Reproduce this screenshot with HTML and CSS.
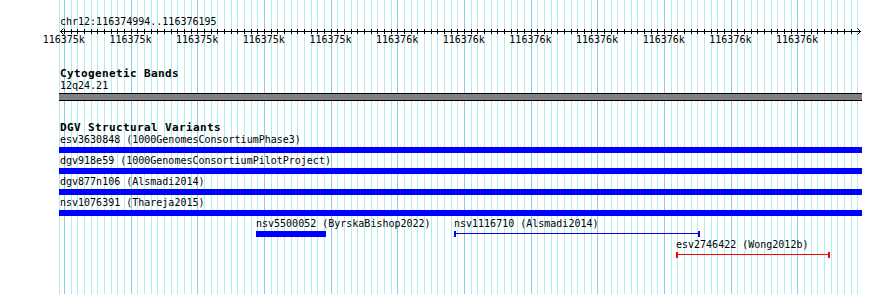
FILE: index.html
```html
<!DOCTYPE html>
<html lang="en">
<head>
<meta charset="utf-8">
<title>chr12:116374994..116376195</title>
<link rel="stylesheet" href="styles.css">
</head>
<body>
<div class="canvas">
  <div class="locus">chr12:116374994..116376195</div>
  <svg class="axis" width="803" height="6" viewBox="0 0 803 6">
    <defs>
      <pattern id="tk" x="5" y="0" width="20" height="6" patternUnits="userSpaceOnUse">
        <rect x="0" y="1" width="1" height="5"/>
        <rect x="7" y="1" width="1" height="5"/>
        <rect x="13" y="1" width="1" height="5"/>
      </pattern>
    </defs>
    <rect x="2" y="0" width="796" height="6" fill="url(#tk)"/>
    <rect x="1" y="3" width="801" height="1"/>
    <path d="M4.5 0.5 L1.5 3.5 L4.5 6.5" fill="none" stroke="#000" stroke-width="1"/>
    <path d="M798.5 0.5 L801.5 3.5 L798.5 6.5" fill="none" stroke="#000" stroke-width="1"/>
  </svg>
  <div class="ticks">
    <span class="tl">116375k</span><span class="tl">116375k</span><span class="tl">116375k</span><span class="tl">116375k</span><span class="tl">116375k</span><span class="tl">116376k</span><span class="tl">116376k</span><span class="tl">116376k</span><span class="tl">116376k</span><span class="tl">116376k</span><span class="tl">116376k</span><span class="tl">116376k</span>
  </div>

  <div class="track-title first">Cytogenetic Bands</div>
  <div class="label">12q24.21</div>
  <div class="band"></div>

  <div class="track-title second">DGV Structural Variants</div>
  <div class="row">
    <div class="label">esv3630848 (1000GenomesConsortiumPhase3)</div>
    <div class="bar"></div>
  </div>
  <div class="row">
    <div class="label">dgv918e59 (1000GenomesConsortiumPilotProject)</div>
    <div class="bar"></div>
  </div>
  <div class="row">
    <div class="label">dgv877n106 (Alsmadi2014)</div>
    <div class="bar"></div>
  </div>
  <div class="row">
    <div class="label">nsv1076391 (Thareja2015)</div>
    <div class="bar"></div>
  </div>
  <div class="lane">
    <div class="feat" style="left:197px">
      <div class="flabel">nsv5500052 (ByrskaBishop2022)</div>
      <div class="fbar" style="width:70px"></div>
    </div>
    <div class="feat" style="left:395px">
      <div class="flabel">nsv1116710 (Alsmadi2014)</div>
      <div class="span blue" style="width:246px"></div>
    </div>
  </div>
  <div class="lane">
    <div class="feat" style="left:617px">
      <div class="flabel">esv2746422 (Wong2012b)</div>
      <div class="span red" style="width:154px"></div>
    </div>
  </div>
</div>
</body>
</html>
```

FILE: styles.css
```css
html, body {
  margin: 0;
  padding: 0;
  background: #ffffff;
}

body {
  width: 890px;
  height: 294px;
  overflow: hidden;
  font-family: "DejaVu Sans Mono", "Liberation Mono", monospace;
  font-size: 10px;
  line-height: 12px;
  color: #000;
}

.canvas {
  position: relative;
  margin-left: 59px;
  width: 803px;
  height: 294px;
  box-sizing: border-box;
  padding-top: 16px;
  background:
    linear-gradient(#afeeee, #afeeee) 0 0 / 1px 100% no-repeat,
    linear-gradient(to right, #87ceeb 0 1px, transparent 1px 67px, #87ceeb 67px 68px, transparent 68px 133px, #87ceeb 133px 134px, transparent 134px) 5px 0 / 200px 100% repeat-x,
    linear-gradient(to right, #afeeee 0 1px, transparent 1px 7px, #afeeee 7px 8px, transparent 8px 13px, #afeeee 13px 14px, transparent 14px) 5px 0 / 20px 100% repeat-x;
}

.locus {
  padding-left: 1px;
  white-space: nowrap;
}

.axis {
  display: block;
  overflow: visible;
}

.ticks {
  display: flex;
  margin-left: -28.5px;
  white-space: nowrap;
}

.tl {
  flex: 0 0 66.667px;
  text-align: center;
}

.track-title {
  padding-left: 1px;
  font-weight: bold;
  font-size: 11px;
  letter-spacing: 0.38px;
  line-height: 12px;
  white-space: nowrap;
}

.track-title.first {
  margin-top: 22px;
}

.track-title.second {
  margin-top: 21px;
}

.label {
  padding-left: 1px;
  white-space: nowrap;
}

.band {
  margin-top: 1px;
  height: 8px;
  box-sizing: border-box;
  border-top: 1px solid #000;
  border-bottom: 1px solid #000;
  background: #808080;
}

.row {
  height: 21px;
}

.bar {
  margin-top: 1px;
  height: 6px;
  background: #0000ff;
}

.lane {
  position: relative;
  height: 21px;
}

.feat {
  position: absolute;
  top: 0;
}

.flabel {
  white-space: nowrap;
}

.fbar {
  margin-top: 1px;
  height: 6px;
  background: #0000ff;
}

.span {
  margin-top: 1px;
  height: 6px;
  box-sizing: border-box;
}

.span.blue {
  border-left: 2px solid #0000ff;
  border-right: 2px solid #0000ff;
  background: linear-gradient(#0000ff, #0000ff) 0 2px / 100% 1px no-repeat;
}

.span.red {
  border-left: 2px solid #ff0000;
  border-right: 2px solid #ff0000;
  background: linear-gradient(#ff0000, #ff0000) 0 2px / 100% 1px no-repeat;
}
```
